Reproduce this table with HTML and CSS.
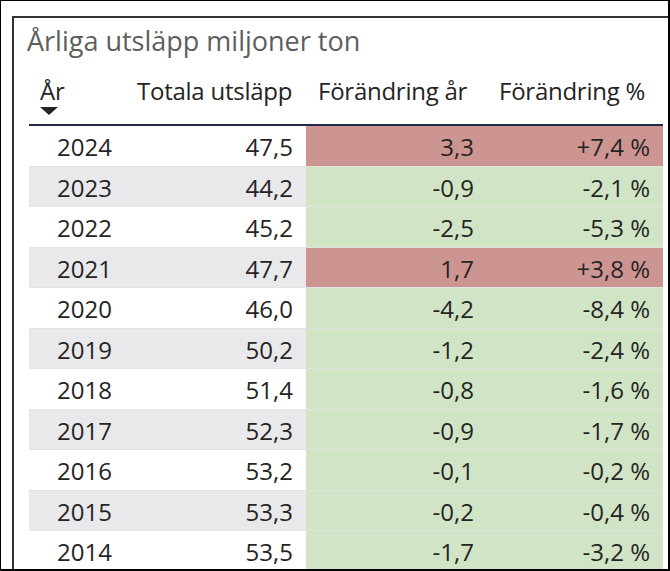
FILE: index.html
```html
<!DOCTYPE html>
<html lang="sv">
<head>
<meta charset="utf-8">
<title>Årliga utsläpp miljoner ton</title>
<link rel="stylesheet" href="styles.css">
</head>
<body>
<div class="frame">
  <section class="visual">
    <h1 class="title">Årliga utsläpp miljoner ton</h1>
    <div class="table" role="table">
      <div class="row head" role="row">
        <div class="th first" role="columnheader">År<svg class="sort" width="18" height="8" viewBox="0 0 18 8"><polygon points="0,0 18,0 9,8"/></svg></div>
        <div class="th" role="columnheader">Totala utsläpp</div>
        <div class="th" role="columnheader">Förändring år</div>
        <div class="th" role="columnheader">Förändring %</div>
      </div>
      <div class="row" role="row"><div class="td">2024</div><div class="td">47,5</div><div class="td up">3,3</div><div class="td up">+7,4 %</div></div>
      <div class="row" role="row"><div class="td">2023</div><div class="td">44,2</div><div class="td down">-0,9</div><div class="td down">-2,1 %</div></div>
      <div class="row" role="row"><div class="td">2022</div><div class="td">45,2</div><div class="td down">-2,5</div><div class="td down">-5,3 %</div></div>
      <div class="row" role="row"><div class="td">2021</div><div class="td">47,7</div><div class="td up">1,7</div><div class="td up">+3,8 %</div></div>
      <div class="row" role="row"><div class="td">2020</div><div class="td">46,0</div><div class="td down">-4,2</div><div class="td down">-8,4 %</div></div>
      <div class="row" role="row"><div class="td">2019</div><div class="td">50,2</div><div class="td down">-1,2</div><div class="td down">-2,4 %</div></div>
      <div class="row" role="row"><div class="td">2018</div><div class="td">51,4</div><div class="td down">-0,8</div><div class="td down">-1,6 %</div></div>
      <div class="row" role="row"><div class="td">2017</div><div class="td">52,3</div><div class="td down">-0,9</div><div class="td down">-1,7 %</div></div>
      <div class="row" role="row"><div class="td">2016</div><div class="td">53,2</div><div class="td down">-0,1</div><div class="td down">-0,2 %</div></div>
      <div class="row" role="row"><div class="td">2015</div><div class="td">53,3</div><div class="td down">-0,2</div><div class="td down">-0,4 %</div></div>
      <div class="row" role="row"><div class="td">2014</div><div class="td">53,5</div><div class="td down">-1,7</div><div class="td down">-3,2 %</div></div>
    </div>
  </section>
</div>
</body>
</html>
```

FILE: styles.css
```css
* {
  box-sizing: border-box;
}

html,
body {
  margin: 0;
  background: #ffffff;
}

body {
  font-family: "Open Sans", "Noto Sans", sans-serif;
  color: #252423;
}

.frame {
  width: 670px;
  height: 571px;
  border: 1px solid #000000;
  border-right-width: 2px;
  border-bottom-width: 2px;
  display: flex;
  overflow: hidden;
}

.visual {
  flex: 1;
  min-width: 0;
  margin: 15px 0 0 11px;
  border-left: 2px solid #333333;
  border-top: 2px solid #333333;
  display: flex;
  flex-direction: column;
}

.title {
  margin: 0;
  padding: 6px 0 0 13px;
  font-size: 27px;
  line-height: 34px;
  font-weight: 400;
  color: #605e5c;
  white-space: nowrap;
}

.table {
  margin-left: 15px;
  width: 634px;
  flex: none;
}

.row {
  display: grid;
  grid-template-columns: 96px 181px 181px 176px;
  height: 40.5px;
  border-bottom: 1px solid #e2e2e2;
}

.row.head {
  height: auto;
  border-bottom: 2px solid #1f2a44;
}

.th {
  padding: 18px 6px 9px 12px;
  font-size: 24px;
  line-height: 30px;
  font-weight: 400;
  letter-spacing: -0.25px;
  white-space: nowrap;
}

.th.first {
  padding-left: 11px;
}

.sort {
  display: block;
  margin-top: 1px;
  fill: #252423;
}

.td {
  display: flex;
  align-items: center;
  justify-content: flex-end;
  padding: 2px 13px 0 0;
  font-size: 24px;
  white-space: nowrap;
}

.row:nth-child(odd) .td {
  background: #e9e9eb;
}

.row .td.up {
  background: #cd9592;
}

.row .td.down {
  background: #d1e4c6;
}
```
